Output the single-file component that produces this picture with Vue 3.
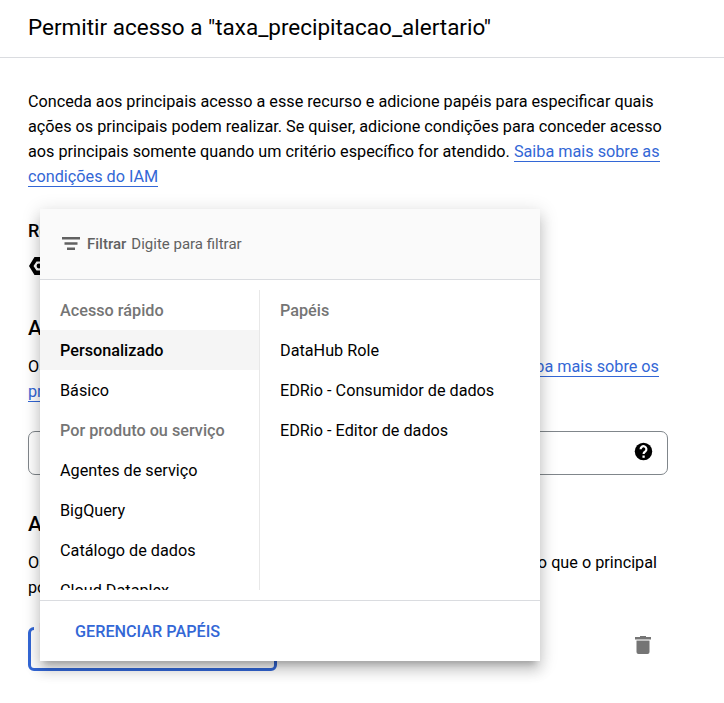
<script setup>
import { ref } from 'vue'

const quickAccess = ['Personalizado', 'Básico']
const services = ['Agentes de serviço', 'BigQuery', 'Catálogo de dados', 'Cloud Dataplex']
const roles = ['DataHub Role', 'EDRio - Consumidor de dados', 'EDRio - Editor de dados']
const selected = ref('Personalizado')
</script>

<template>
  <div class="page">
    <header class="header">
      <h1>Permitir acesso a "taxa_precipitacao_alertario"</h1>
    </header>

    <main class="content">
      <p class="intro">
        Conceda aos principais acesso a esse recurso e adicione papéis para especificar quais<br />
        ações os principais podem realizar. Se quiser, adicione condições para conceder acesso<br />
        aos principais somente quando um critério específico for atendido.
        <a>Saiba mais sobre as<br />condições do IAM</a>
      </p>

      <h3 class="resource-title">Recurso</h3>
      <div class="resource">
        <svg class="hex" viewBox="0 0 20 18">
          <path fill-rule="evenodd" d="M5.500 0h9L20 9l-5.500 9h-9L0 9zM7.500 4.500 4.500 9l3 4.500h5l3-4.500-3-4.500z" />
          <circle cx="10" cy="9" r="2.400" />
        </svg>
      </div>

      <h2 class="principals-title">Adicionar principais</h2>
      <p class="line"><span>Os principais são usuários, grupos, domínios ou contas de serviço.</span><a>Saiba mais sobre os</a></p>
      <p><a>principais no IAM</a></p>

      <div class="principal-input">
        <svg class="help" viewBox="0 0 24 24">
          <circle cx="12" cy="12" r="10" />
          <path class="mark" d="M8.700 9.300a3.300 3.300 0 1 1 5.600 2.350c-1.300 1.200-2.200 1.700-2.200 3.300" />
          <path class="dot" d="M10.800 16.600h2.600v2.600h-2.600z" />
        </svg>
      </div>

      <h2 class="roles-title">Atribuir papéis</h2>
      <p class="line roles-line"><span>Os papéis são compostos por conjuntos de permissões e</span><span>determinam o que o principal</span></p>
      <p>pode fazer com esse recurso.</p>

      <div class="role-row">
        <fieldset class="role-select"><legend>Papel</legend></fieldset>
        <svg class="trash" viewBox="0 0 16 18">
          <path d="M5 0h6v1h5v2.500H0V1h5z" />
          <path d="M1.500 5h13v11a2 2 0 0 1-2 2h-9a2 2 0 0 1-2-2z" />
          <path class="lid-gap" d="M1.500 3.500h13V5h-13z" />
        </svg>
      </div>
    </main>

    <section class="menu">
      <div class="filter">
        <svg class="filter-icon" viewBox="0 0 18 13">
          <path d="M0 0h18v2.500H0zM2.500 5.200h13v2.500h-13zM5 10.400h8v2.500H5z" />
        </svg>
        <b>Filtrar</b><span>Digite para filtrar</span>
      </div>
      <div class="columns">
        <div class="categories">
          <div class="item group">Acesso rápido</div>
          <div v-for="item in quickAccess" :key="item" class="item" :class="{ active: item === selected }" @click="selected = item">{{ item }}</div>
          <div class="item group">Por produto ou serviço</div>
          <div v-for="item in services" :key="item" class="item">{{ item }}</div>
        </div>
        <div class="roles">
          <div class="item group">Papéis</div>
          <div v-for="role in roles" :key="role" class="item">{{ role }}</div>
        </div>
      </div>
      <div class="footer">GERENCIAR PAPÉIS</div>
    </section>
  </div>
</template>

<style>
body { background: #fff; overflow: hidden; }
</style>

<style scoped>
* { box-sizing: border-box; }
.page { position: relative; width: 724px; height: 703px; overflow: hidden; font: 16.236px/25px Roboto, sans-serif; color: #000; }
h1, h2, h3, p { margin: 0; }
.header { height: 58px; padding: 12px 28px 0; border-bottom: 1px solid #dadce0; }
h1 { font-size: 22.48px; line-height: 31px; font-weight: 400; }
.content { display: flex; flex-direction: column; padding: 31px 28px 0; white-space: nowrap; }
a { color: #3367d6; border-bottom: 1px solid #3367d6; }
h3 { font-size: 18px; line-height: 25px; font-weight: 500; }
h2 { font-size: 21px; line-height: 30px; font-weight: 500; }
.resource-title { margin-top: 29px; }
.resource { height: 18px; margin-top: 14px; padding-left: 1px; }
.hex { display: block; width: 20px; height: 18px; }
.principals-title { margin-top: 38px; margin-bottom: 11px; }
.line { display: flex; width: 631px; justify-content: space-between; align-items: center; }
.line a { line-height: 19px; }
.roles-line { width: 629px; }
.principal-input { display: flex; justify-content: flex-end; width: 640px; height: 44px; margin-top: 27px; padding: 9px 13px; border: 1px solid #80868b; border-radius: 7px; }
.help { width: 21px; height: 21px; }
.mark { fill: none; stroke: #fff; stroke-width: 2.5; }
.dot { fill: #fff; }
.roles-title { margin-top: 34px; margin-bottom: 11px; }
.role-row { display: flex; justify-content: space-between; width: 623px; margin-top: 20px; padding-top: 7px; }
.role-select { width: 249px; height: 53px; margin: -9px 0 0; padding: 0 3px; border: 3px solid #3367d6; border-radius: 6px; }
.role-select legend { padding: 0 5px; font-size: 13px; line-height: 20px; color: #3367d6; }
.trash { width: 16px; height: 18px; margin-top: 9px; fill: #757575; }
.lid-gap { fill: #c4c4c4; }
.menu { position: absolute; left: 40px; top: 209px; width: 500px; height: 452px; background: #fff; box-shadow: 0 6.25px 6.25px -3.75px rgba(0,0,0,.2), 0 10px 12.5px 1.25px rgba(0,0,0,.14), 0 3.75px 17.5px 2.5px rgba(0,0,0,.12); }
.filter { display: flex; align-items: center; height: 71px; padding: 0 22px; background: #fafafa; border-bottom: 1px solid #dadce0; font-size: 15px; color: #616161; }
.filter-icon { width: 18px; height: 13px; margin: 0 7px 2px 0; fill: #616161; }
.filter b { margin-right: 5px; font-weight: 500; }
.columns { display: grid; grid-template-columns: 220px 280px; height: 300px; margin: 10px 0; overflow: hidden; }
.categories { overflow: hidden; border-right: 1px solid #e8e8e8; }
.item { height: 40px; padding: 0 20px; line-height: 42px; white-space: nowrap; }
.group { color: #757575; font-weight: 500; }
.active { background: #f5f5f5; font-weight: 500; }
.footer { height: 61px; padding: 0 35px; border-top: 1px solid #dadce0; color: #3367d6; font-size: 16.22px; font-weight: 500; line-height: 61px; }
</style>
